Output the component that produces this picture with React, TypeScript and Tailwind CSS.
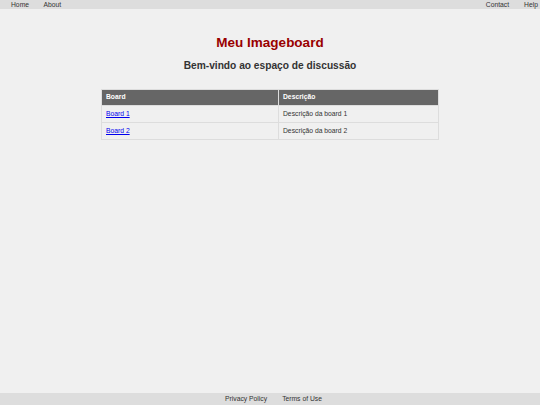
const NAV_LEFT = ["Home", "About"];
const NAV_RIGHT = ["Contact", "Help"];
const BOARDS = [
  { name: "Board 1", desc: "Descrição da board 1" },
  { name: "Board 2", desc: "Descrição da board 2" },
];

export default function App() {
  return (
    <div className="flex min-h-screen flex-col bg-[#f0f0f0] font-['Liberation_Sans',Arial,sans-serif] text-[6.75px] text-[#333]">
      {/* Top nav */}
      <nav className="flex h-[9px] items-center justify-between bg-[#dddddd] leading-[9px]">
        <div className="flex gap-[14.5px] pl-[11px]">
          {NAV_LEFT.map((l) => (
            <a key={l} className="text-[#333]">{l}</a>
          ))}
        </div>
        <div className="flex gap-[15px] pr-[2px]">
          {NAV_RIGHT.map((l) => (
            <a key={l} className="text-[#333]">{l}</a>
          ))}
        </div>
      </nav>

      <main className="flex flex-col items-center">
        <h1 className="mt-[26px] text-[13.5px] leading-[16px] font-bold text-[#990000]">Meu Imageboard</h1>
        <h2 className="mt-[9px] text-[10.2px] leading-[12px] font-bold text-[#333]">
          Bem-vindo ao espaço de discussão
        </h2>

        <table className="mt-[17px] w-[338px] border-collapse border border-[#dddddd]">
          <thead>
            <tr className="h-[16px] bg-[#666666] text-left text-white">
              <th className="w-[177px] border border-[#dddddd] px-[4px] font-bold">Board</th>
              <th className="border border-[#dddddd] px-[4px] font-bold">Descrição</th>
            </tr>
          </thead>
          <tbody>
            {BOARDS.map((b) => (
              <tr key={b.name} className="h-[17px]">
                <td className="border border-[#dddddd] px-[4px]">
                  <a className="text-[#0000ee] underline">{b.name}</a>
                </td>
                <td className="border border-[#dddddd] px-[4px]">{b.desc}</td>
              </tr>
            ))}
          </tbody>
        </table>
      </main>

      {/* Footer */}
      <footer className="mt-auto flex h-[12px] items-center justify-center gap-[15px] bg-[#dddddd] pl-[7px] leading-[12px]">
        <a className="text-[#333]">Privacy Policy</a>
        <a className="text-[#333]">Terms of Use</a>
      </footer>
    </div>
  );
}
